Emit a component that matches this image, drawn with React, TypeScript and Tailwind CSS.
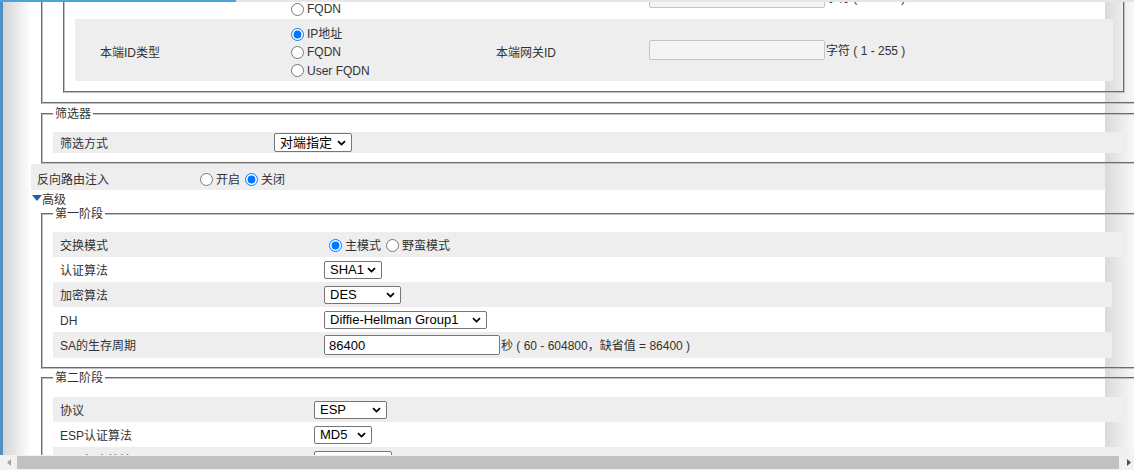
import React from 'react';

const font = "font-['Liberation_Sans','Noto_Sans_CJK_SC',sans-serif]";
const groove = 'border-[#c0c0c0] [border-style:groove]';

function Chevron() {
  return (
    <svg width="9" height="6" viewBox="0 0 9 6" className="shrink-0">
      <path d="M1 1.2 L4.5 4.6 L8 1.2" fill="none" stroke="#000" strokeWidth="1.8" />
    </svg>
  );
}

function FakeSelect({ value, className }: { value: string; className: string }) {
  return (
    <div
      className={`flex items-center justify-between rounded-[2px] border border-[#767676] bg-white pr-[5px] pl-[5px] text-[13px] leading-none text-black ${className}`}
    >
      <span>{value}</span>
      <Chevron />
    </div>
  );
}

function Radio({ name, label, checked }: { name: string; label: string; checked?: boolean }) {
  return (
    <label className="flex items-center">
      <input
        type="radio"
        name={name}
        defaultChecked={checked}
        className="m-0 mr-[3px] ml-[5px] h-[13px] w-[13px]"
      />
      <span>{label}</span>
    </label>
  );
}

function Legend({ children }: { children: React.ReactNode }) {
  return <legend className="px-[2px] leading-[16px] text-[#333]">{children}</legend>;
}

export default function App() {
  const gray = 'bg-[#edeeed]';

  return (
    <div className={`flex h-[470px] w-[1134px] flex-col overflow-hidden bg-white text-[12px] leading-[16px] text-[#333] ${font}`}>
      {/* top strip */}
      <div className="flex h-[2px] shrink-0">
        <div className="w-[236px] bg-[#4aa6d8]" />
        <div className="flex-1 bg-[#e6e6e6]" />
      </div>

      <div className="flex h-[453px] shrink-0">
        <div className="w-[3px] shrink-0 bg-[#4f8fc2]" />
        <div className="w-[28px] shrink-0 bg-[linear-gradient(to_right,#d4d4d4,#ffffff)]" />

        <div className="min-w-0 flex-1 overflow-hidden bg-[linear-gradient(to_right,#dadada,#f8f8f8)] bg-[length:29px_100%] bg-right bg-no-repeat">
          {/* IKE identity (scrolled) */}
          <div className={`-mt-[24px] ml-[10px] w-[1098px] border-x-2 border-b-2 px-[10px] pb-[9px] ${groove}`}>
            <div className={`ml-[10px] w-[1062px] border-x-2 border-b-2 px-[10px] pb-[10px] ${groove}`}>
              <div className="flex h-[41px]">
                <div className="flex w-[211px] items-center pb-[4px] pl-[25px]">对端ID类型</div>
                <div className="flex w-[210px] flex-col pt-[4px]">
                  <div className="flex h-[18px] items-center">
                    <Radio name="peerid" label="IP地址" checked />
                  </div>
                  <div className="flex h-[18px] items-center">
                    <Radio name="peerid" label="FQDN" />
                  </div>
                </div>
                <div className="flex w-[153px] items-center pb-[4px]">对端网关ID</div>
                <div className="flex items-center pb-[2px]">
                  <input
                    type="text"
                    disabled
                    className="h-[20px] w-[176px] rounded-[2px] border border-[#c4c4c4] bg-[#f3f4f3]"
                  />
                  <span className="ml-[1px]">字符 ( 1 - 255 )</span>
                </div>
              </div>

              <div className={`flex h-[62px] ${gray}`}>
                <div className="flex w-[211px] items-center pt-[6px] pl-[25px]">本端ID类型</div>
                <div className="flex w-[210px] flex-col pt-[6px]">
                  <div className="flex h-[18px] items-center">
                    <Radio name="localid" label="IP地址" checked />
                  </div>
                  <div className="flex h-[18px] items-center">
                    <Radio name="localid" label="FQDN" />
                  </div>
                  <div className="flex h-[19px] items-center">
                    <Radio name="localid" label="User FQDN" />
                  </div>
                </div>
                <div className="flex w-[153px] items-center pt-[6px]">本端网关ID</div>
                <div className="flex items-center">
                  <input
                    type="text"
                    disabled
                    className="h-[20px] w-[176px] rounded-[2px] border border-[#c4c4c4] bg-[#f3f4f3]"
                  />
                  <span className="ml-[1px] pt-[2px]">字符 ( 1 - 255 )</span>
                </div>
              </div>
            </div>
          </div>

          {/* filter */}
          <fieldset className={`mt-[2px] ml-[10px] w-[1098px] border-2 px-[10px] pt-[10px] pb-[9px] ${groove}`}>
            <Legend>筛选器</Legend>
            <div className={`flex h-[21px] w-[1074px] items-center ${gray}`}>
              <div className="w-[221px] pt-[2px] pl-[7px]">筛选方式</div>
              <FakeSelect value="对端指定" className="h-[19px] w-[78px]" />
            </div>
          </fieldset>

          <div className={`flex h-[26px] w-[1074px] items-center pt-[5px] ${gray}`}>
            <div className="w-[164px] pl-[6px]">反向路由注入</div>
            <Radio name="rri" label="开启" />
            <Radio name="rri" label="关闭" checked />
          </div>

          <div className="flex h-[16px] items-center pt-[3px] pl-[1px]">
            <svg width="10" height="6" viewBox="0 0 10 6" className="mt-[-3px]">
              <path d="M0 0 L10 0 L5 6Z" fill="#1f60a8" />
            </svg>
            <span>高级</span>
          </div>

          {/* phase 1 */}
          <fieldset className={`ml-[10px] w-[1098px] border-2 px-[10px] pt-[10px] pb-[9px] ${groove}`}>
            <Legend>第一阶段</Legend>
            <div className={`flex h-[25px] w-[1074px] items-center ${gray}`}>
              <div className="w-[271px] pt-[2px] pl-[7px]">交换模式</div>
              <div className="flex items-center pt-[2px]">
                <Radio name="mode" label="主模式" checked />
                <Radio name="mode" label="野蛮模式" />
              </div>
            </div>
            <div className="flex h-[25px] w-[1074px] items-center">
              <div className="w-[271px] pt-[2px] pl-[7px]">认证算法</div>
              <FakeSelect value="SHA1" className="h-[18px] w-[58px]" />
            </div>
            <div className={`flex h-[25px] w-[1059px] items-center ${gray}`}>
              <div className="w-[271px] pt-[2px] pl-[7px]">加密算法</div>
              <FakeSelect value="DES" className="h-[18px] w-[77px]" />
            </div>
            <div className="flex h-[25px] w-[1074px] items-center">
              <div className="w-[271px] pt-[2px] pl-[7px]">DH</div>
              <FakeSelect value="Diffie-Hellman Group1" className="h-[18px] w-[163px]" />
            </div>
            <div className={`flex h-[26px] w-[1059px] items-center ${gray}`}>
              <div className="w-[271px] pt-[2px] pl-[7px]">SA的生存周期</div>
              <input
                type="text"
                defaultValue="86400"
                className="h-[20px] w-[176px] rounded-[2px] border border-[#767676] bg-white px-[4px] text-[13px] text-black"
              />
              <span className="ml-[1px] pt-[2px]">秒 ( 60 - 604800，缺省值 = 86400 )</span>
            </div>
          </fieldset>

          {/* phase 2 */}
          <fieldset className={`mt-[1px] ml-[10px] w-[1098px] border-2 px-[10px] pt-[11px] pb-[9px] ${groove}`}>
            <Legend>第二阶段</Legend>
            <div className={`flex h-[25px] w-[1074px] items-center ${gray}`}>
              <div className="w-[261px] pt-[2px] pl-[7px]">协议</div>
              <FakeSelect value="ESP" className="h-[18px] w-[73px]" />
            </div>
            <div className="flex h-[25px] w-[1074px] items-center">
              <div className="w-[261px] pt-[2px] pl-[7px]">ESP认证算法</div>
              <FakeSelect value="MD5" className="h-[18px] w-[58px]" />
            </div>
            <div className={`flex h-[25px] w-[1074px] items-center ${gray}`}>
              <div className="w-[261px] pt-[2px] pl-[7px]">ESP加密算法</div>
              <FakeSelect value="DES" className="h-[18px] w-[78px]" />
            </div>
          </fieldset>
        </div>
      </div>

      {/* horizontal scrollbar */}
      <div className="flex h-[15px] shrink-0 items-center bg-[#f1f1f1]">
        <div className="flex w-[17px] justify-center">
          <svg width="4" height="7" viewBox="0 0 4 7">
            <path d="M4 0 L0 3.5 L4 7Z" fill="#a3a3a3" />
          </svg>
        </div>
        <div className="h-[13px] w-[1102px] bg-[#c1c1c1]" />
        <div className="flex flex-1 justify-end pr-[3px]">
          <svg width="4" height="7" viewBox="0 0 4 7">
            <path d="M0 0 L4 3.5 L0 7Z" fill="#505050" />
          </svg>
        </div>
      </div>
    </div>
  );
}
